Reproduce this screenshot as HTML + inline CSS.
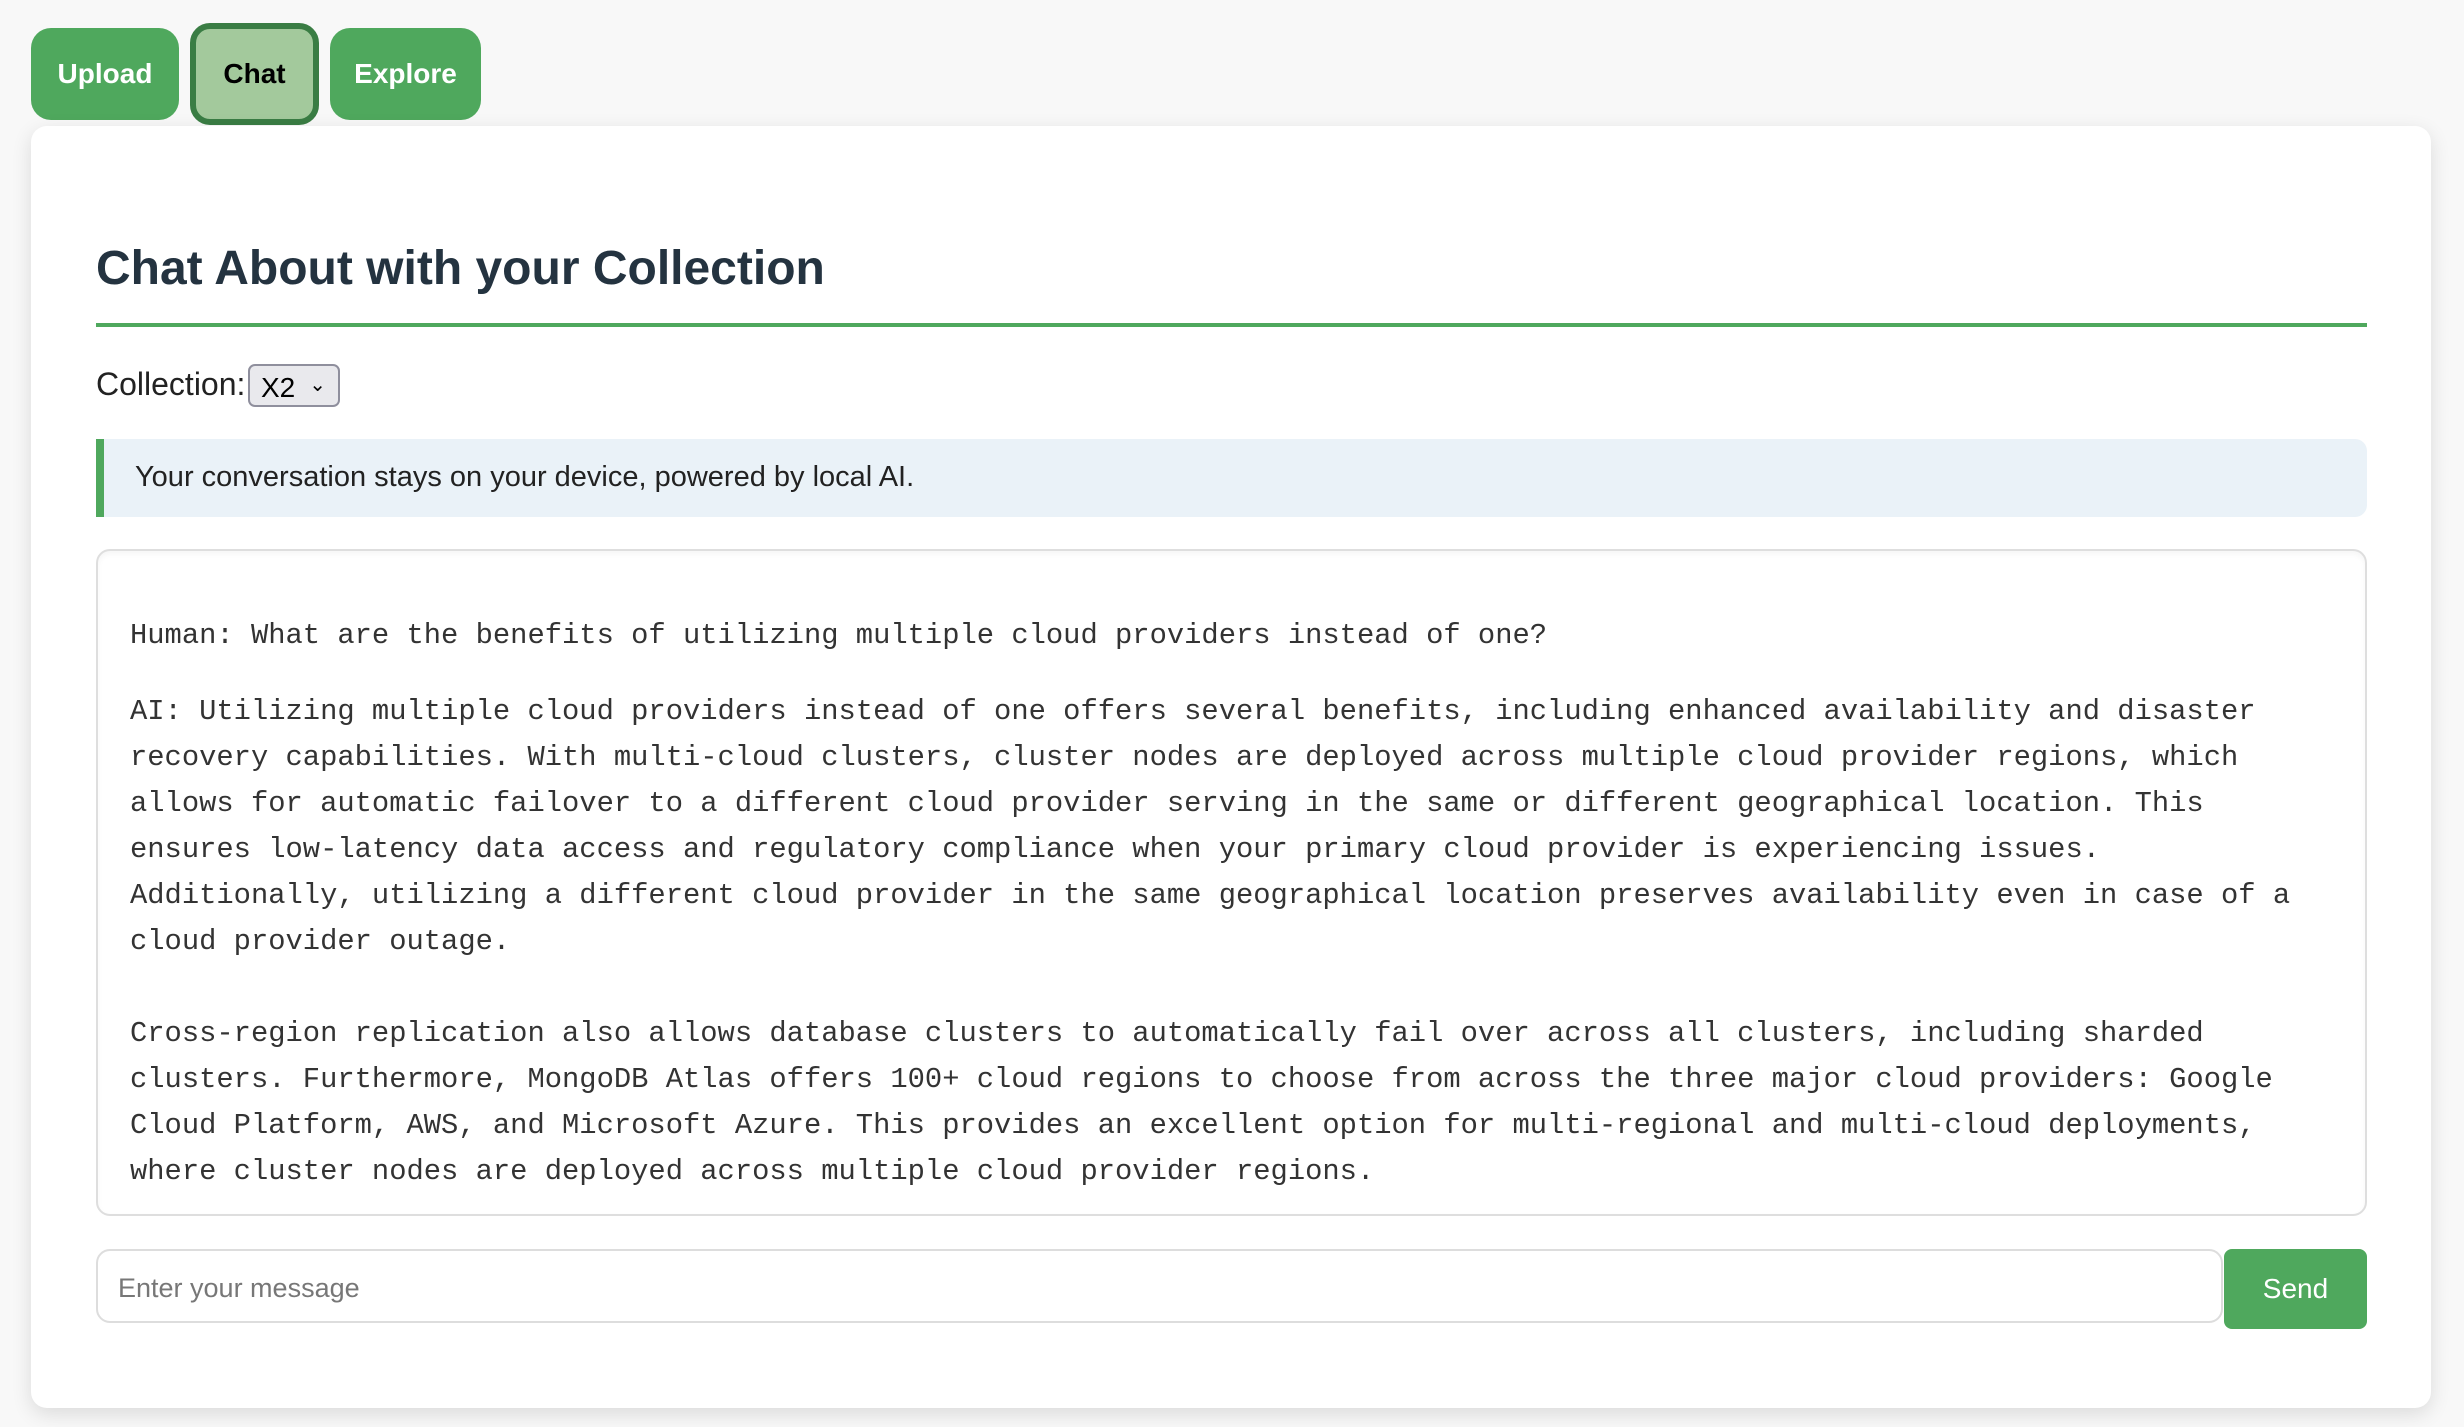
<!DOCTYPE html>
<html><head><meta charset="utf-8"><style>
*{box-sizing:border-box;margin:0;padding:0}
body{width:2464px;height:1427px;background:#f8f8f8;font-family:"Liberation Sans",Arial,sans-serif;position:relative;overflow:hidden}
.tab{position:absolute;top:28px;height:92px;background:#4fa85d;color:#fff;border-radius:20px;font-size:28px;font-weight:bold;display:flex;align-items:center;justify-content:center}
.card{position:absolute;left:31px;top:126px;width:2400px;height:1282px;background:#fff;border-radius:16px;box-shadow:0 6px 20px rgba(0,0,0,0.12)}
h1{position:absolute;left:96px;top:241px;font-size:48px;font-weight:bold;color:#243340;white-space:nowrap}
.rule{position:absolute;left:96px;top:323px;width:2271px;height:4px;background:#4fa85d}
.lbl{position:absolute;left:96px;top:366px;font-size:32px;color:#222}
.sel{position:absolute;left:248px;top:364px;width:92px;height:43px;background:#e9e9ed;border:2px solid #8f8f9d;border-radius:7px;font-size:28px;color:#000;padding:6px 0 0 11px}
.info{position:absolute;left:96px;top:439px;width:2271px;height:78px;background:#eaf2f8;border-left:8px solid #4fa85d;border-radius:0 12px 12px 0;font-size:29px;color:#222;padding:22px 0 0 31px}
.chat{position:absolute;left:96px;top:549px;width:2271px;height:667px;border:2px solid #dedede;border-radius:14px;box-shadow:inset 0 3px 6px rgba(0,0,0,0.04)}
pre{position:absolute;left:130px;font-family:"Liberation Mono","Courier New",monospace;font-size:28.8px;line-height:46px;color:#333;white-space:pre}
.inp{position:absolute;left:96px;top:1249px;width:2127px;height:74px;border:2px solid #ddd;border-radius:14px;font-size:27px;color:#777;padding:22px 0 0 20px}
.send{position:absolute;left:2224px;top:1249px;width:143px;height:80px;background:#4fa85d;border-radius:8px;color:#fff;font-size:28px;display:flex;align-items:center;justify-content:center}
</style></head><body>
<div class="tab" style="left:31px;width:148px">Upload</div>
<div class="tab" style="left:190px;top:23px;width:129px;height:102px;background:#a3c99c;color:#000;border:6px solid #3a7d44">Chat</div>
<div class="tab" style="left:330px;width:151px">Explore</div>
<div class="card"></div>
<h1>Chat About with your Collection</h1>
<div class="rule"></div>
<div class="lbl">Collection:</div>
<div class="sel">X2 <span style="font-size:20px;position:absolute;right:12px;top:6px">&#8964;</span></div>
<div class="info">Your conversation stays on your device, powered by local AI.</div>
<div class="chat"></div>
<pre style="top:613px">Human: What are the benefits of utilizing multiple cloud providers instead of one?</pre>
<pre style="top:689px">AI: Utilizing multiple cloud providers instead of one offers several benefits, including enhanced availability and disaster
recovery capabilities. With multi-cloud clusters, cluster nodes are deployed across multiple cloud provider regions, which
allows for automatic failover to a different cloud provider serving in the same or different geographical location. This
ensures low-latency data access and regulatory compliance when your primary cloud provider is experiencing issues.
Additionally, utilizing a different cloud provider in the same geographical location preserves availability even in case of a
cloud provider outage.

Cross-region replication also allows database clusters to automatically fail over across all clusters, including sharded
clusters. Furthermore, MongoDB Atlas offers 100+ cloud regions to choose from across the three major cloud providers: Google
Cloud Platform, AWS, and Microsoft Azure. This provides an excellent option for multi-regional and multi-cloud deployments,
where cluster nodes are deployed across multiple cloud provider regions.</pre>
<div class="inp">Enter your message</div>
<div class="send">Send</div>
</body></html>
